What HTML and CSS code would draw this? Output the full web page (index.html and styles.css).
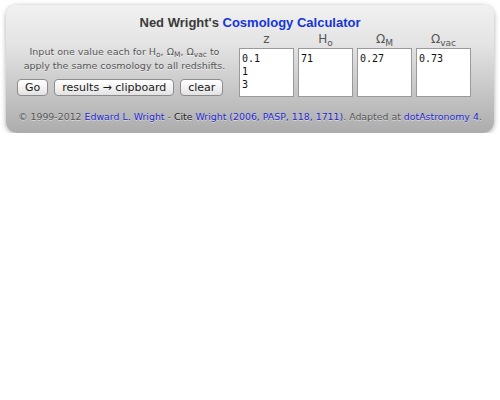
FILE: index.html
```html
<!DOCTYPE html>
<html>
<head>
<meta charset="utf-8">
<link rel="stylesheet" href="styles.css">
</head>
<body>
<div class="panel">
  <div class="title">Ned Wright's <a class="link">Cosmology Calculator</a></div>
  <div class="main">
    <div class="left">
      <div class="intro">Input one value each for H<sub>o</sub>, &Omega;<sub>M</sub>, &Omega;<sub>vac</sub> to<br>apply the same cosmology to all redshifts.</div>
      <div class="buttons">
        <button class="btn">Go</button>
        <button class="btn">results &#x2192; clipboard</button>
        <button class="btn">clear</button>
      </div>
    </div>
    <div class="cols">
      <div class="col"><div class="head">z</div><textarea class="ta">0.1
1
3</textarea></div>
      <div class="col"><div class="head">H<sub>o</sub></div><textarea class="ta">71</textarea></div>
      <div class="col"><div class="head">&Omega;<sub>M</sub></div><textarea class="ta">0.27</textarea></div>
      <div class="col"><div class="head">&Omega;<sub>vac</sub></div><textarea class="ta">0.73</textarea></div>
    </div>
  </div>
  <div class="footer">&copy; 1999-2012 <a class="link">Edward L. Wright</a> - <span class="cite">Cite</span> <a class="link">Wright (2006, PASP, 118, 1711)</a>. Adapted at <a class="link">dotAstronomy 4</a>.</div>
</div>
</body>
</html>
```
FILE: styles.css
```css
html, body { margin: 0; padding: 0; background: #fff; }
body { font-family: "DejaVu Sans", Verdana, sans-serif; }
.panel {
  margin: 5px 6px 0 6px;
  width: 488px;
  box-sizing: border-box;
  height: 128px;
  border-radius: 11px;
  background: linear-gradient(#f1f1f1, #e4e4e4 30%, #acacac);
  box-shadow: 0 1px 5px rgba(0,0,0,0.35);
  padding: 10px 0 0 11px;
}
.title {
  text-align: center;
  font-family: "Liberation Sans", Arial, sans-serif;
  font-weight: bold;
  font-size: 13px;
  color: #3a3a3a;
  line-height: 16px;
  margin-left: -11px;
}
.link { color: #2228d0; text-decoration: none; }
.title .link { color: #1534d8; }
.main { display: flex; }
.left { width: 215px; padding-top: 14px; }
.intro {
  font-size: 9.5px;
  color: #555;
  text-align: center;
  line-height: 14px;
  text-shadow: 0 1px 0 rgba(255,255,255,0.6);
  white-space: nowrap;
}
.intro sub { font-size: 7.5px; line-height: 0; vertical-align: -2px; }
.buttons { display: flex; gap: 6px; margin-top: 6px; }
.btn {
  font-family: "DejaVu Sans", Verdana, sans-serif;
  font-size: 11px;
  color: #1a1a1a;
  height: 17px;
  padding: 0 7px;
  border: 1px solid #8c8c8c;
  border-radius: 4px;
  background: linear-gradient(#ffffff, #f0f0f0 60%, #e2e2e2);
  line-height: 15px;
}
.cols { display: flex; gap: 4px; margin-left: 7px; }
.col { display: flex; flex-direction: column; align-items: center; width: 55px; }
.head { font-size: 12px; color: #555; line-height: 15px; height: 16px; padding-top: 1px; }
.head sub { font-size: 9px; line-height: 0; vertical-align: -3px; }
.ta {
  width: 55px;
  height: 49px;
  box-sizing: border-box;
  resize: none;
  border: 1px solid #9a9a9a;
  background: #fff;
  font-family: "DejaVu Sans Mono", monospace;
  font-size: 10px;
  line-height: 13px;
  padding: 3px 2px 0 2px;
  margin: 0;
  overflow: hidden;
  color: #111;
}
.footer {
  font-size: 9.4px;
  color: #555;
  text-align: center;
  margin: 14px 0 0 -11px;
  text-shadow: 0 1px 0 rgba(255,255,255,0.5);
  white-space: nowrap;
}
.cite { color: #222; }
```
